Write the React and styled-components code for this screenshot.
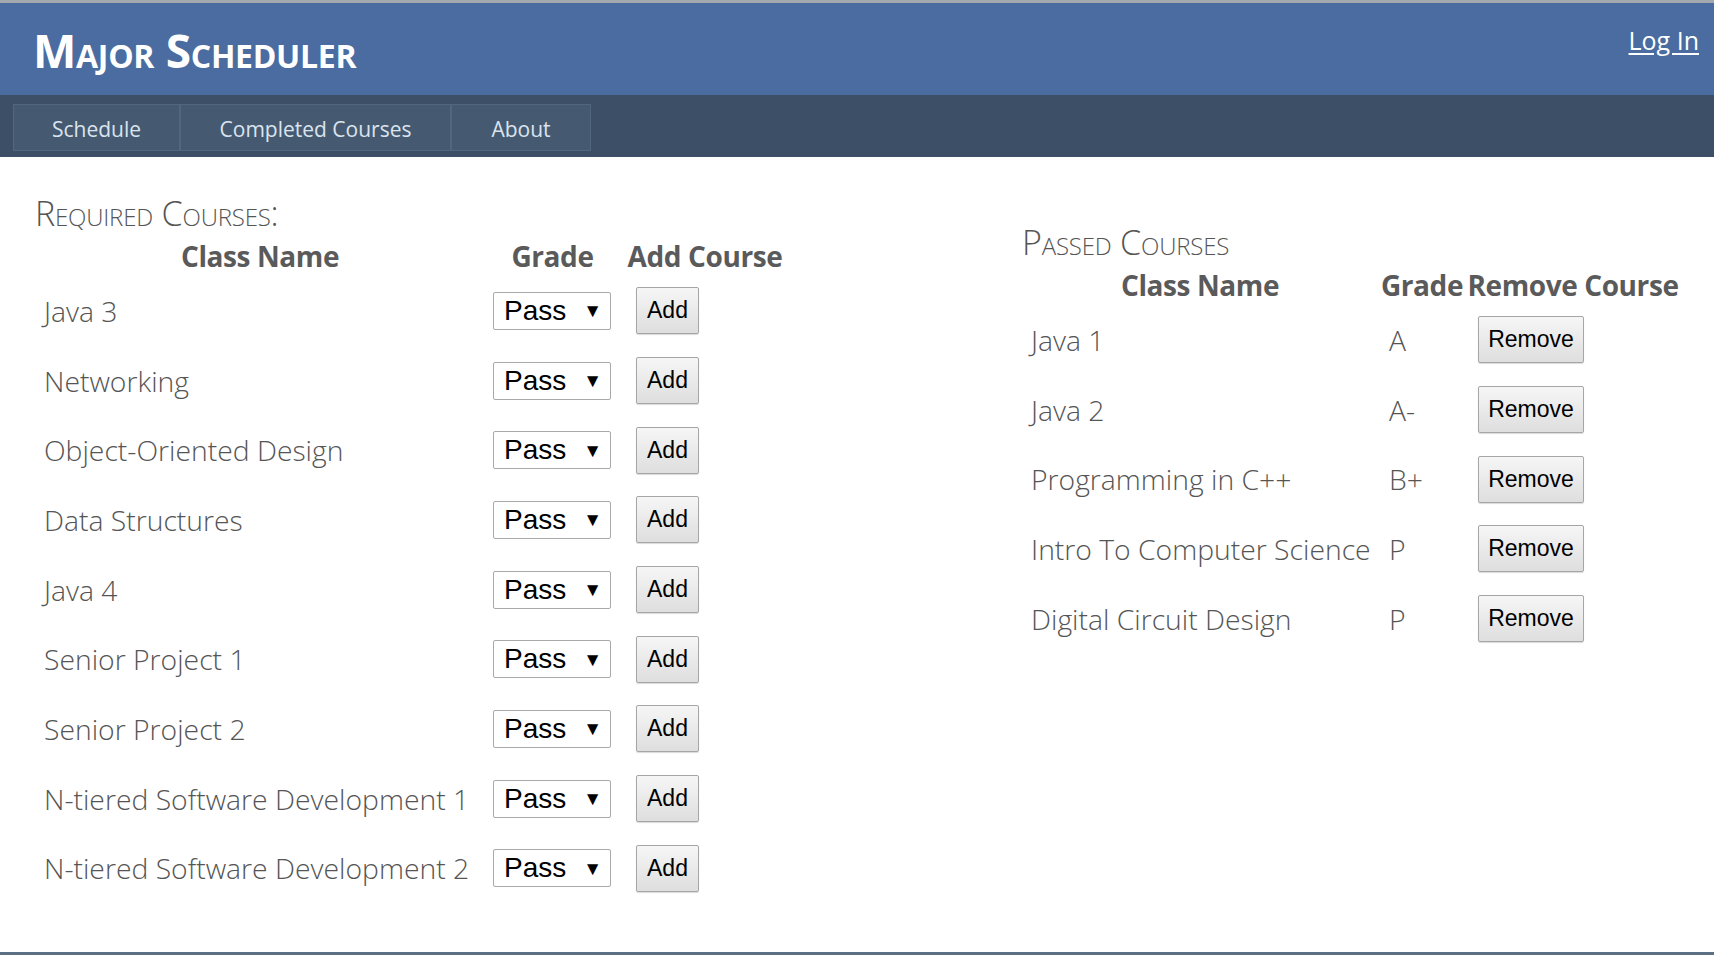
import React from 'react';
import styled, { createGlobalStyle } from 'styled-components';

const GlobalStyle = createGlobalStyle`
  html, body {
    margin: 0;
    padding: 0;
    background: #ffffff;
  }
  body {
    font-family: 'Open Sans', 'Noto Sans', 'DejaVu Sans', sans-serif;
  }
  * {
    box-sizing: border-box;
  }
`;

const Page = styled.div`
  min-height: 100vh;
  display: flex;
  flex-direction: column;
  border-top: 3px solid #a3a8ae;
  border-bottom: 3px solid #5b6f85;
`;

const Header = styled.header`
  height: 92px;
  background: #4a6ca0;
  display: flex;
  justify-content: space-between;
  align-items: flex-start;
  padding: 0 15px 0 33px;
`;

const Title = styled.h1`
  margin: 19px 0 0;
  color: #ffffff;
  font-size: 46px;
  font-weight: 700;
  font-variant: small-caps;
  letter-spacing: -0.3px;
  line-height: 56px;
`;

const LogIn = styled.a`
  margin-top: 17px;
  color: #ffffff;
  font-size: 25px;
  line-height: 40px;
  text-decoration: underline;
  text-underline-offset: 3px;
  cursor: pointer;
`;

const Nav = styled.nav`
  height: 62px;
  background: #3c4f66;
  display: flex;
  align-items: flex-start;
  padding: 9px 12px 0 13px;
`;

const Tab = styled.a`
  height: 47px;
  width: ${(props) => props.$width}px;
  display: flex;
  align-items: center;
  justify-content: center;
  padding-top: 3px;
  background: #455a71;
  border: 1px solid #52667d;
  color: #dbe4ee;
  font-size: 21px;
  cursor: pointer;
`;

const Main = styled.main`
  flex: 1;
  display: grid;
  grid-template-columns: 987px 1fr;
  padding-left: 35px;
`;

const Section = styled.section`
  padding-top: ${(props) => props.$top}px;
`;

const Heading = styled.h2`
  margin: 0 0 3px;
  color: #555555;
  font-size: 34px;
  font-weight: 300;
  font-variant: small-caps;
  line-height: 40px;
  letter-spacing: -0.2px;
`;

const Table = styled.table`
  border-collapse: collapse;
  table-layout: fixed;
`;

const HeadCell = styled.th`
  width: ${(props) => props.$width}px;
  height: 40px;
  padding: 0;
  color: #5a5a5a;
  font-size: 28px;
  font-weight: 700;
  text-align: center;
  letter-spacing: -0.4px;
  white-space: nowrap;
`;

const Row = styled.tr`
  height: 69.7px;
`;

const NameCell = styled.td`
  padding: 0 0 0 9px;
  color: #555555;
  font-size: 28.3px;
  font-weight: 300;
  white-space: nowrap;
`;

const GradeCell = styled.td`
  padding: 0 0 0 ${(props) => props.$pad}px;
  color: #555555;
  font-size: 28.3px;
  font-weight: 300;
`;

const ActionCell = styled.td`
  padding: 0 0 0 ${(props) => props.$pad}px;
`;

const GradeSelect = styled.div`
  width: 118px;
  height: 38px;
  display: flex;
  align-items: center;
  justify-content: space-between;
  padding: 0 8px 0 10px;
  background: #ffffff;
  border: 1px solid #a9a9a9;
  border-radius: 2px;
  font-family: 'Liberation Sans', Arial, sans-serif;
  font-size: 28px;
  color: #000000;

  > span {
    font-family: 'DejaVu Sans', sans-serif;
    font-size: 19px;
  }
`;

const Button = styled.button`
  width: ${(props) => props.$width}px;
  height: 47px;
  padding: 0;
  background: linear-gradient(#f6f6f6, #dedede);
  border: 1px solid #a6a6a6;
  border-radius: 2px;
  box-shadow: 0 1px 1px rgba(0, 0, 0, 0.15);
  font-family: 'Liberation Sans', Arial, sans-serif;
  font-size: 23px;
  color: #000000;
  cursor: pointer;
`;

const required = [
  'Java 3',
  'Networking',
  'Object-Oriented Design',
  'Data Structures',
  'Java 4',
  'Senior Project 1',
  'Senior Project 2',
  'N-tiered Software Development 1',
  'N-tiered Software Development 2',
];

const passed = [
  { name: 'Java 1', grade: 'A' },
  { name: 'Java 2', grade: 'A-' },
  { name: 'Programming in C++', grade: 'B+' },
  { name: 'Intro To Computer Science', grade: 'P' },
  { name: 'Digital Circuit Design', grade: 'P' },
];

const App = () => {
  return (
    <Page>
      <GlobalStyle />
      <Header>
        <Title>Major Scheduler</Title>
        <LogIn>Log In</LogIn>
      </Header>
      <Nav>
        <Tab $width={167}>Schedule</Tab>
        <Tab $width={271}>Completed Courses</Tab>
        <Tab $width={140}>About</Tab>
      </Nav>
      <Main>
        <Section $top={36}>
          <Heading>Required Courses:</Heading>
          <Table>
            <thead>
              <tr>
                <HeadCell $width={450}>Class Name</HeadCell>
                <HeadCell $width={135}>Grade</HeadCell>
                <HeadCell $width={170}>Add Course</HeadCell>
              </tr>
            </thead>
            <tbody>
              {required.map((name) => (
                <Row key={name}>
                  <NameCell>{name}</NameCell>
                  <GradeCell $pad={8}>
                    <GradeSelect>
                      Pass <span>▼</span>
                    </GradeSelect>
                  </GradeCell>
                  <ActionCell $pad={16}>
                    <Button $width={63}>Add</Button>
                  </ActionCell>
                </Row>
              ))}
            </tbody>
          </Table>
        </Section>
        <Section $top={65}>
          <Heading>Passed Courses</Heading>
          <Table>
            <thead>
              <tr>
                <HeadCell $width={356}>Class Name</HeadCell>
                <HeadCell $width={88}>Grade</HeadCell>
                <HeadCell $width={214}>Remove Course</HeadCell>
              </tr>
            </thead>
            <tbody>
              {passed.map((course) => (
                <Row key={course.name}>
                  <NameCell>{course.name}</NameCell>
                  <GradeCell $pad={11}>{course.grade}</GradeCell>
                  <ActionCell $pad={12}>
                    <Button $width={106}>Remove</Button>
                  </ActionCell>
                </Row>
              ))}
            </tbody>
          </Table>
        </Section>
      </Main>
    </Page>
  );
};

export default App;
